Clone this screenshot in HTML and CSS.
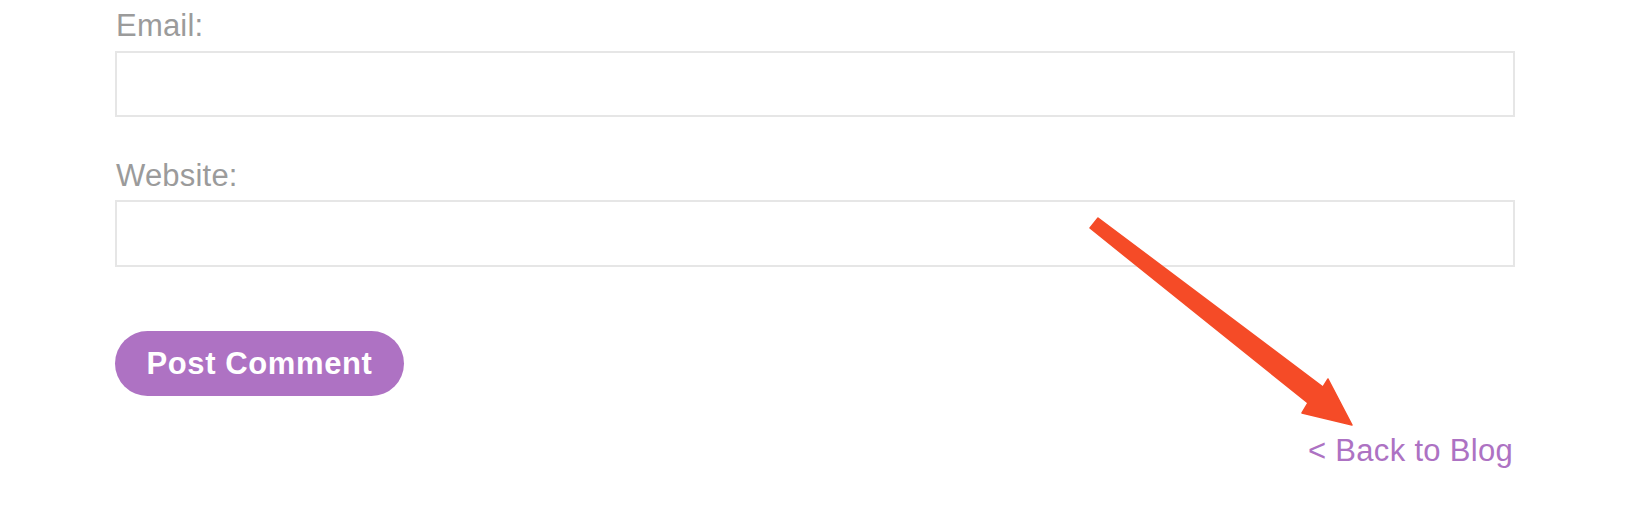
FILE: index.html
```html
<!DOCTYPE html>
<html>
<head>
<meta charset="utf-8">
<link rel="stylesheet" href="styles.css">
</head>
<body>
<div class="page">
  <form class="comment-form">
    <div class="field">
      <label class="label" for="email">Email:</label>
      <input class="input" id="email" type="text">
    </div>
    <div class="field field-website">
      <label class="label" for="website">Website:</label>
      <input class="input" id="website" type="text">
    </div>
    <button class="btn" type="button">Post Comment</button>
  </form>
  <div class="back-row">
    <a class="back-link" href="#">&lt; Back to Blog</a>
  </div>
  <svg class="annotation" width="1638" height="514" viewBox="0 0 1638 514">
    <polygon points="1098,218 1323,387 1328,379 1352,425 1302,413 1308,403 1090,228" fill="#f54b27" stroke="#f54b27" stroke-width="1.5" stroke-linejoin="round"/>
  </svg>
</div>
</body>
</html>
```
FILE: styles.css
```css
html, body {
  margin: 0;
  padding: 0;
  background: #ffffff;
}
.page {
  position: relative;
  width: 1638px;
  height: 514px;
  overflow: hidden;
  font-family: "Liberation Sans", Arial, sans-serif;
}
.comment-form {
  display: flex;
  flex-direction: column;
  align-items: flex-start;
  padding: 8px 0 0 115px;
}
.field {
  display: flex;
  flex-direction: column;
  width: 1400px;
}
.field-website {
  margin-top: 41px;
}
.label {
  font-size: 31px;
  line-height: 36px;
  color: #9b9b9b;
  letter-spacing: 0.2px;
  padding-left: 1px;
}
.input {
  box-sizing: border-box;
  width: 1400px;
  height: 66px;
  margin: 7px 0 0 0;
  border: 2px solid #e6e6e6;
  background: #fff;
  outline: none;
  padding: 0 12px;
  font-size: 24px;
}
.field-website .input {
  margin-top: 6px;
  height: 67px;
}
.btn {
  margin-top: 64px;
  box-sizing: border-box;
  height: 65px;
  width: 289px;
  padding: 0;
  border: none;
  border-radius: 33px;
  background: #ae72c3;
  color: #ffffff;
  font-family: "Liberation Sans", Arial, sans-serif;
  font-weight: bold;
  font-size: 31px;
  letter-spacing: 0.6px;
  cursor: pointer;
}
.back-row {
  display: flex;
  justify-content: flex-end;
  width: 1400px;
  margin-left: 115px;
  margin-top: 37px;
}
.back-link {
  font-size: 31px;
  line-height: 36px;
  color: #ad72c3;
  text-decoration: none;
  letter-spacing: 0.3px;
  margin-right: 2px;
}
.annotation {
  position: absolute;
  left: 0;
  top: 0;
  pointer-events: none;
}
```
